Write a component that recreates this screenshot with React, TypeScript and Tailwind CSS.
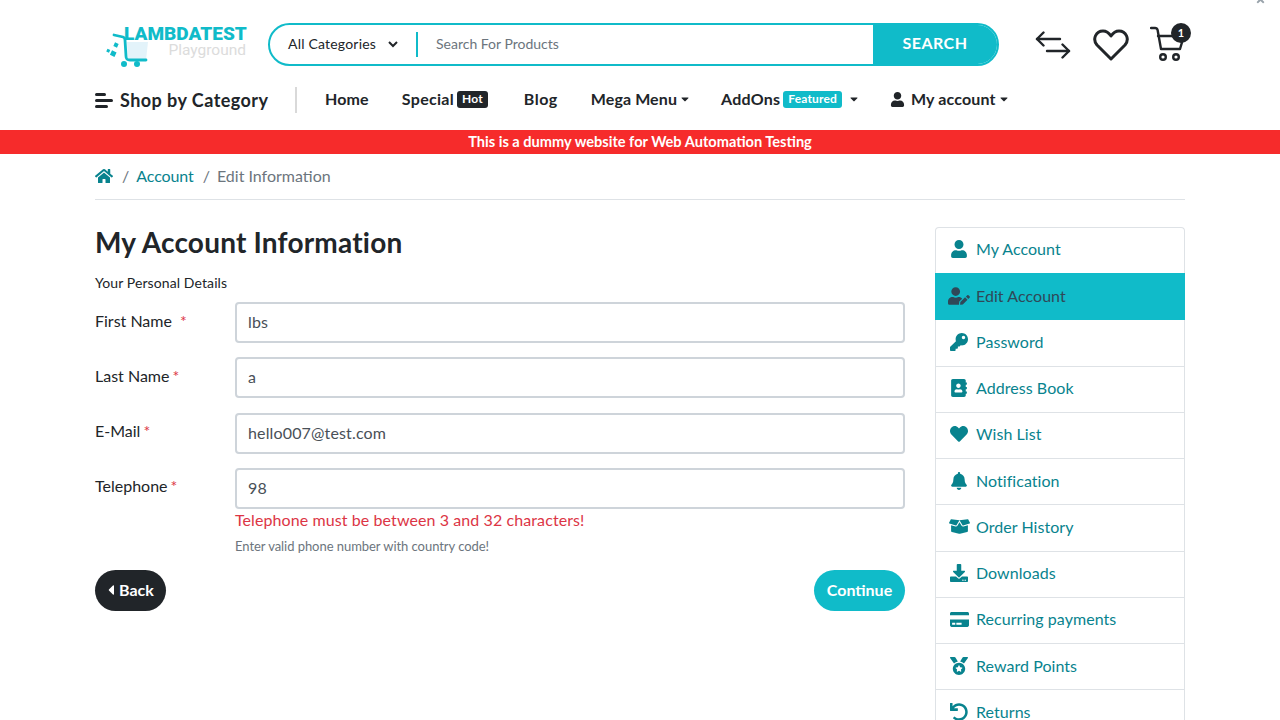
import React from "react";
import {
  FaAddressBook,
  FaBell,
  FaBoxOpen,
  FaCaretDown,
  FaCaretLeft,
  FaCreditCard,
  FaDownload,
  FaHeart,
  FaHome,
  FaKey,
  FaMedal,
  FaTimes,
  FaUndo,
  FaUser,
  FaUserEdit,
} from "react-icons/fa";

const Logo = () => (
  <div className="relative w-[140px] h-[44px] shrink-0">
    <svg className="absolute left-0 top-0" width="46" height="46" viewBox="0 0 46 46">
      <path d="M21 19h21l-2 18H22z" fill="#e3f3fa" />
      <path d="M8 12l9 2c1.500.5 2 1 2 3l1 16c0 3 1 4 4 4h16" fill="none" stroke="#10bbc9" strokeWidth="2.800" strokeLinecap="round" />
      <circle cx="18" cy="41" r="3" fill="#10bbc9" />
      <circle cx="31" cy="41" r="3" fill="#10bbc9" />
      <rect x="8" y="20" width="4" height="4" fill="#10bbc9" transform="rotate(25 10 22)" />
      <rect x="1" y="26" width="3" height="3" fill="#10bbc9" transform="rotate(25 2 27)" />
      <rect x="5" y="28" width="5" height="5" fill="#10bbc9" transform="rotate(25 7 30)" />
    </svg>
    <span className="absolute left-[18px] top-[3px] text-[19px] leading-[16px] font-black text-[#10bbc9] font-['Roboto',sans-serif] whitespace-nowrap">
      LAMBDATEST
    </span>
    <span className="absolute right-0 top-[19px] text-[15.500px] leading-[16px] text-[#dcdcdc] font-['Roboto',sans-serif] whitespace-nowrap">
      Playground
    </span>
  </div>
);

const SearchBar = () => (
  <div className="flex w-[731px] h-[43px] ml-[22px] rounded-full border-2 border-[#10bbc9] overflow-hidden">
    <div className="flex items-center w-[146px] pl-[18px] pb-[2px] text-[14px] tracking-[0.2px] text-[#212529]">
      <span>All Categories</span>
      <svg className="ml-[12px]" width="10" height="8" viewBox="0 0 10 8">
        <path d="M1 2l4 4 4-4" fill="none" stroke="#212529" strokeWidth="2" />
      </svg>
    </div>
    <div className="w-[2px] h-[25px] my-auto bg-[#10bbc9]" />
    <div className="flex-1 flex items-center pl-[18px] pb-[2px] text-[14px] text-[#6c757d]">Search For Products</div>
    <div className="w-[124px] pb-[4px] bg-[#10bbc9] text-white font-bold text-[16px] tracking-[0.45px] flex items-center justify-center">SEARCH</div>
  </div>
);

const HeaderIcons = () => (
  <div className="flex items-center ml-[36px] h-[44px]">
    <svg width="36" height="28" viewBox="0 0 36 28" fill="none" stroke="#212529" strokeWidth="2.400" strokeLinecap="round" strokeLinejoin="round">
      <path d="M8.500 1.500L2 8l6.500 6.500" />
      <path d="M2 8h23" />
      <path d="M27.500 13.500L34 20l-6.500 6.500" />
      <path d="M12 20h22" />
    </svg>
    <svg className="ml-[22px]" width="36" height="32" viewBox="0 0 36 32" fill="none" stroke="#212529" strokeWidth="3" strokeLinejoin="round">
      <path d="M18 30L4 16C-1 10 3 2 10 2c4 0 6 2 8 5 2-3 4-5 8-5 7 0 11 8 6 14z" />
    </svg>
    <div className="relative ml-[21px] w-[41px] h-[44px]">
      <svg className="absolute left-0 top-[3px]" width="36" height="38" viewBox="0 0 36 38" fill="none" stroke="#212529" strokeWidth="2.400" strokeLinecap="round" strokeLinejoin="round">
        <path d="M1 2h4c1.500 0 2.300.8 2.600 2L11 23h19l3-10" />
        <path d="M8 10h25" />
        <circle cx="13" cy="31" r="2.800" />
        <circle cx="26" cy="31" r="2.800" />
      </svg>
      <span className="absolute left-[21px] top-0 w-[20px] h-[20px] rounded-full bg-[#212529] text-white text-[11px] font-bold flex items-center justify-center">
        1
      </span>
    </div>
  </div>
);

const Caret = () => <FaCaretDown className="ml-[2px] text-[12px]" />;

const Nav = () => (
  <div className="flex items-center h-[26px] mt-[19px] pl-[95px] text-[#212529] font-bold text-[16px] tracking-[0.15px]">
    <div className="flex items-center w-[200px] h-[26px] mt-[2px] border-r-2 border-[#d9d9d9] mr-[28px] box-content">
      <svg width="18" height="15" viewBox="0 0 18 15" fill="#212529">
        <rect x="0" y="0" width="11" height="3" rx="1.500" />
        <rect x="0" y="6" width="18" height="3" rx="1.500" />
        <rect x="0" y="12" width="13" height="3" rx="1.500" />
      </svg>
      <span className="ml-[7px] text-[18px] tracking-[0.45px]">Shop by Category</span>
    </div>
    <span>Home</span>
    <span className="ml-[33px] tracking-[0.3px]">Special</span>
    <span className="ml-[3px] px-[5px] h-[17px] bg-[#212529] text-white text-[12px] rounded-[3px] flex items-center">Hot</span>
    <span className="ml-[36px] tracking-[0.5px]">Blog</span>
    <span className="ml-[33px] flex items-center tracking-[0.1px]">Mega Menu<Caret /></span>
    <span className="ml-[30px] tracking-[0.25px]">AddOns</span>
    <span className="ml-[3px] px-[5px] h-[17px] bg-[#10bbc9] text-white text-[12px] tracking-[0.15px] rounded-[3px] flex items-center">Featured</span>
    <FaCaretDown className="ml-[6px] text-[12px]" />
    <span className="ml-[30px] flex items-center">
      <FaUser className="text-[15px] mr-[6px]" />
      My account<Caret />
    </span>
  </div>
);

const Row = ({ label, gap, value, children }: { label: string; gap: string; value: string; children?: React.ReactNode }) => (
  <div className="flex">
    <label className="w-[140px] pt-[6.500px] text-[16px] leading-[24px] text-[#212529]">
      {label}
      <span className={`text-[#dc3545] ${gap}`}>*</span>
    </label>
    <div className="flex-1">
      <div className="h-[41px] pb-[1px] border-2 border-[#ced4da] rounded-[4px] px-[11px] flex items-center text-[16px] tracking-[0.15px] text-[#495057]">{value}</div>
      {children}
    </div>
  </div>
);

const sideItems = [
  { icon: FaUser, label: "My Account", size: "text-[18px]" },
  { icon: FaUserEdit, label: "Edit Account", size: "text-[22px]", active: true },
  { icon: FaKey, label: "Password", size: "text-[18px]" },
  { icon: FaAddressBook, label: "Address Book", size: "text-[18px]" },
  { icon: FaHeart, label: "Wish List", size: "text-[18px]" },
  { icon: FaBell, label: "Notification", size: "text-[18px]" },
  { icon: FaBoxOpen, label: "Order History", size: "text-[21px]" },
  { icon: FaDownload, label: "Downloads", size: "text-[18px]" },
  { icon: FaCreditCard, label: "Recurring payments", size: "text-[19px]" },
  { icon: FaMedal, label: "Reward Points", size: "text-[18px]" },
  { icon: FaUndo, label: "Returns", size: "text-[18px]" },
];

const Sidebar = () => (
  <div className="w-[250px] shrink-0 mt-[27px] self-start border border-b-0 border-[#dee2e6] rounded-t-[4px] text-[16px] tracking-[0.05px]">
    {sideItems.map((item, i) => {
      const Icon = item.icon;
      let rowClass = "h-[46.250px] pb-[2px] flex items-center border-b border-[#dee2e6] text-[#08838e]";
      if (item.active) rowClass = "h-[47px] pb-[2px] -mx-px -mt-px flex items-center bg-[#10bbc9] text-[#2f4858]";
      if (i === 0) rowClass = "h-[46.250px] pb-[4px] flex items-center border-b border-[#dee2e6] text-[#08838e]";
      return (
        <div key={item.label} className={rowClass}>
          <span className={`${item.active ? "w-[41px] pl-[7px]" : "w-[40px] pl-[6px]"} flex justify-center ${item.size}`}>
            <Icon />
          </span>
          <span>{item.label}</span>
        </div>
      );
    })}
  </div>
);

export default function App() {
  return (
    <div className="relative h-[720px] overflow-hidden bg-white font-['Lato',sans-serif]">
      <FaTimes className="absolute left-[1255px] top-[-6px] text-[11px] text-[#99a3ab]" />
      <div className="flex items-start pt-[23px] pl-[106px]">
        <Logo />
        <SearchBar />
        <HeaderIcons />
      </div>
      <Nav />
      <div className="mt-[18px] h-[24px] pb-[1px] bg-[#f62b2b] text-white font-bold text-[14.600px] flex items-center justify-center">
        This is a dummy website for Web Automation Testing
      </div>
      <div className="mx-[95px]">
        <div className="h-[46px] pb-[2px] flex items-center text-[16px] border-b border-[#dee2e6]">
          <FaHome className="text-[#08838e] text-[18px]" />
          <span className="ml-[9px] mr-[7px] text-[#6c757d]">/</span>
          <span className="text-[#08838e] tracking-[-0.1px]">Account</span>
          <span className="ml-[9px] mr-[7px] text-[#6c757d]">/</span>
          <span className="text-[#6c757d]">Edit Information</span>
        </div>
        <div className="flex gap-[30px]">
          <div className="flex-1">
            <h1 className="mt-[24px] text-[28px] leading-[36px] font-bold tracking-[0.2px] text-[#212529]">My Account Information</h1>
            <div className="mt-[13px] text-[14px] leading-[20px] tracking-[0.1px] text-[#212529]">Your Personal Details</div>
            <div className="mt-[9px] flex flex-col gap-[14.330px]">
              <Row label="First Name" gap="ml-[8px]" value="lbs" />
              <Row label="Last Name" gap="ml-[3px]" value="a" />
              <Row label="E-Mail" gap="ml-[3px]" value="hello007@test.com" />
              <Row label="Telephone" gap="ml-[3px]" value="98">
                <div className="text-[#dc3545] text-[16px] leading-[22px] tracking-[0.09px]">Telephone must be between 3 and 32 characters!</div>
                <div className="mt-[6px] text-[#6c757d] text-[13px] leading-[18px] tracking-[-0.05px]">Enter valid phone number with country code!</div>
              </Row>
            </div>
            <div className="mt-[15px] flex justify-between">
              <div className="h-[41px] w-[71px] pr-[4px] rounded-full bg-[#212529] text-white font-bold text-[16px] flex items-center justify-center">
                <FaCaretLeft className="text-[16px]" />
                Back
              </div>
              <div className="h-[41px] w-[91px] rounded-full bg-[#10bbc9] text-white font-bold text-[16px] flex items-center justify-center">
                Continue
              </div>
            </div>
          </div>
          <Sidebar />
        </div>
      </div>
    </div>
  );
}
